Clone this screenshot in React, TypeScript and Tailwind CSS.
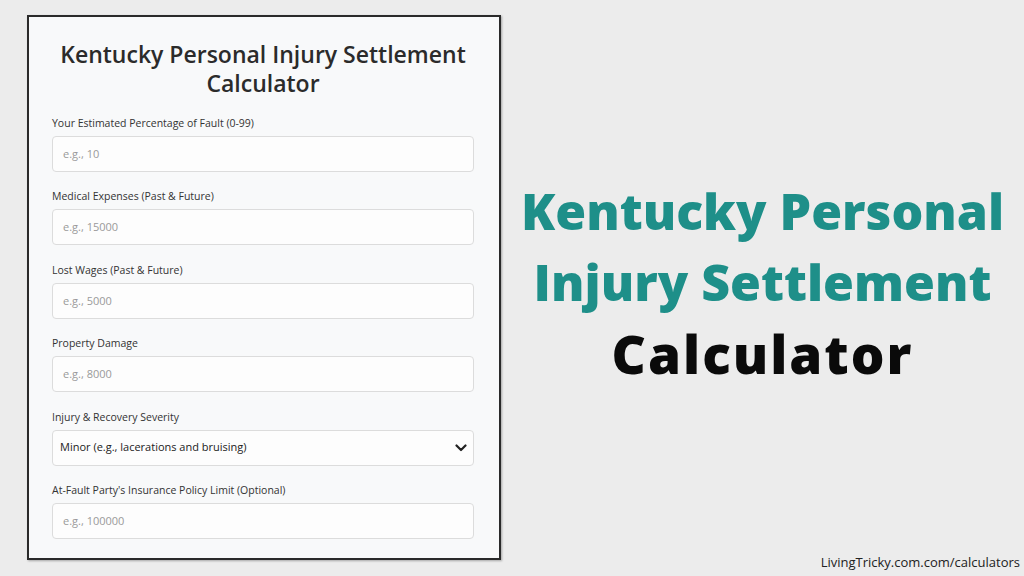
import React from "react";

const fields = [
  { label: "Your Estimated Percentage of Fault (0-99)", placeholder: "e.g., 10" },
  { label: "Medical Expenses (Past & Future)", placeholder: "e.g., 15000" },
  { label: "Lost Wages (Past & Future)", placeholder: "e.g., 5000" },
  { label: "Property Damage", placeholder: "e.g., 8000" },
];

function Field({ label, children }: { label: string; children: React.ReactNode }) {
  return (
    <div className="mb-[17.4px]">
      <div className="mb-[6px] h-[14px] text-[10.5px] leading-[14px] text-[#333]">{label}</div>
      {children}
    </div>
  );
}

function TextBox({ placeholder }: { placeholder: string }) {
  return (
    <div className="flex h-[36px] items-center rounded-[4px] border border-[#dcdcdc] bg-[#fdfdfd] px-[10px] text-[11px] text-[#9a9a9a]">
      {placeholder}
    </div>
  );
}

export default function App() {
  return (
    <div
      className="flex h-[576px] w-[1024px] overflow-hidden bg-[#ececec]"
      style={{ fontFamily: "'Open Sans', 'Noto Sans', sans-serif" }}
    >
      <div className="ml-[27px] mt-[15px] h-[545px] w-[474px] shrink-0 border-2 border-[#2a2a2a] bg-[#f8f9fa] pl-[23px] pr-[25px] shadow-[1px_1px_2px_rgba(0,0,0,0.3)]">
        <h1 className="-mx-[10px] mt-[23px] mb-[18px] whitespace-nowrap text-center text-[23px] font-semibold leading-[29px] text-[#2b2b2b]">
          Kentucky Personal Injury Settlement
          <br />
          Calculator
        </h1>
        {fields.map((f) => (
          <Field key={f.label} label={f.label}>
            <TextBox placeholder={f.placeholder} />
          </Field>
        ))}
        <Field label="Injury & Recovery Severity">
          <div className="flex h-[36px] items-center justify-between rounded-[4px] border border-[#dcdcdc] bg-[#fdfdfd] pl-[7px] pr-[6px] text-[11px] text-[#222]">
            <span>Minor (e.g., lacerations and bruising)</span>
            <svg width="12" height="8" viewBox="0 0 12 8" fill="none">
              <path d="M1.5 1.5 6 6l4.5-4.5" stroke="#222" strokeWidth="2.2" strokeLinecap="round" strokeLinejoin="round" />
            </svg>
          </div>
        </Field>
        <Field label="At-Fault Party's Insurance Policy Limit (Optional)">
          <TextBox placeholder="e.g., 100000" />
        </Field>
      </div>
      <div className="relative flex flex-1 flex-col items-center pt-[176px]">
        <div
          className="text-center text-[50px] font-extrabold leading-[71px] text-[#1e8f89]"
          style={{ fontFamily: "'Open Sans', sans-serif" }}
        >
          <div>Kentucky Personal</div>
          <div>Injury Settlement</div>
          <div className="text-[53px] tracking-[2px] text-[#0a0a0a]">Calculator</div>
        </div>
        <div className="absolute bottom-[4px] right-[4px] text-[13px] text-[#222]">
          LivingTricky.com.com/calculators
        </div>
      </div>
    </div>
  );
}
